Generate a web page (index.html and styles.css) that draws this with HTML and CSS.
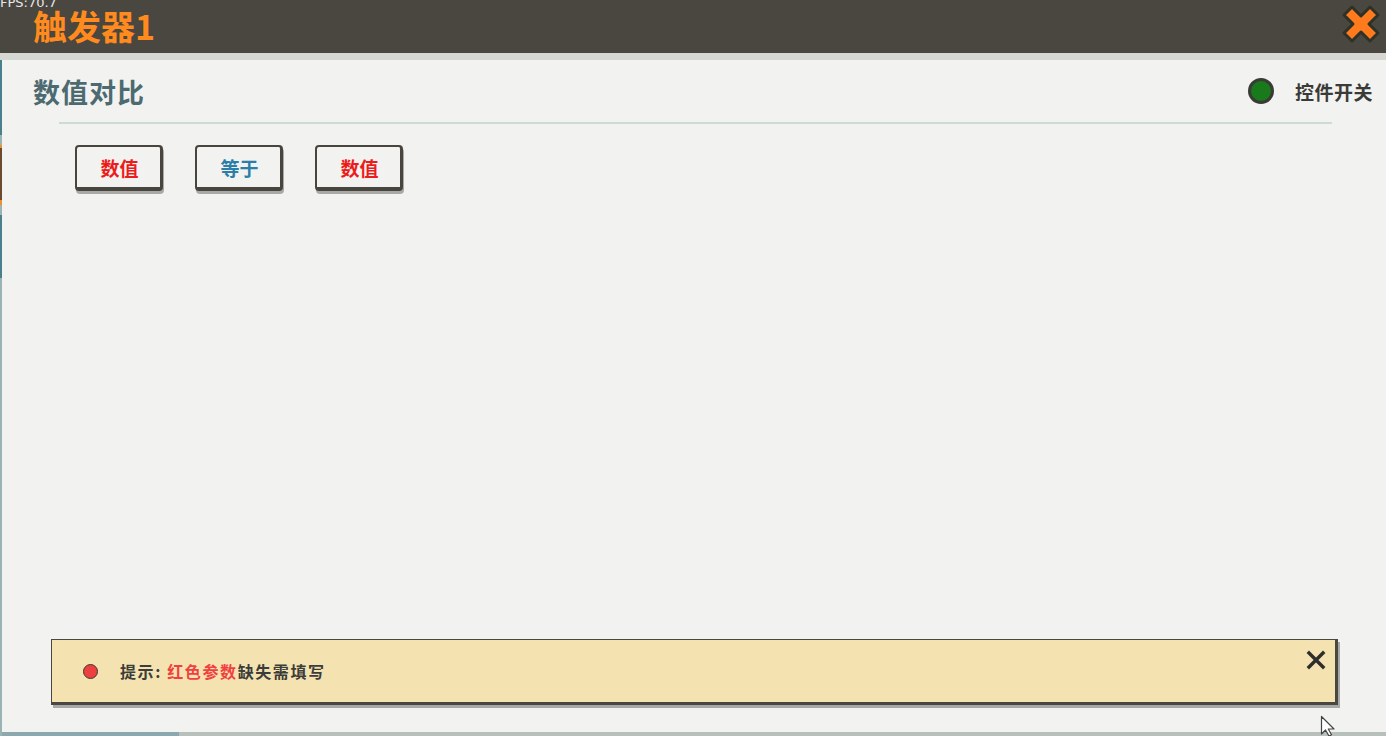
FILE: index.html
```html
<!DOCTYPE html>
<html lang="zh-CN">
<head>
    <meta charset="UTF-8">
    <meta name="viewport" content="width=device-width, initial-scale=1.0">
    <title>触发器1</title>
    <link rel="stylesheet" href="styles.css">
</head>
<body>
    <div class="janela">
        <!-- Barra superior -->
        <div class="topo">
            <div class="fps">FPS:70.7</div>
            <div class="titulo">触发器1</div>
            <button class="fechar-topo" aria-label="关闭">
                <svg width="42" height="42" viewBox="0 0 42 42">
                    <path d="M4 12 L12 4 L21 13 L30 4 L38 12 L29 21 L38 30 L30 38 L21 29 L12 38 L4 30 L13 21 Z"
                          fill="#ff7a1c" stroke="#2e3226" stroke-width="3" stroke-linejoin="round"/>
                </svg>
            </button>
        </div>

        <!-- Painel principal -->
        <div class="painel">
            <div class="painel-cabecalho">
                <div class="painel-titulo">数值对比</div>
                <div class="interruptor">
                    <span class="luz"></span>
                    <span class="interruptor-texto">控件开关</span>
                </div>
            </div>
            <div class="divisor"></div>

            <div class="parametros">
                <div class="parametro vermelho">数值</div>
                <div class="parametro azul">等于</div>
                <div class="parametro vermelho">数值</div>
            </div>

            <div class="espaco"></div>

            <!-- Dica -->
            <div class="dica">
                <span class="dica-ponto"></span>
                <span class="dica-texto">提示: <em>红色参数</em>缺失需填写</span>
                <button class="dica-fechar" aria-label="关闭">
                    <svg width="20" height="20" viewBox="0 0 20 20">
                        <path d="M3 3 L17 17 M17 3 L3 17" stroke="#2e2e2c" stroke-width="3.4" stroke-linecap="square"/>
                    </svg>
                </button>
            </div>

            <div class="rodape"></div>
        </div>

        <svg class="cursor" width="18" height="22" viewBox="0 0 18 22">
            <path d="M1.5 1.5 L1.5 19 L5.5 15 L9 21 L11.5 19.8 L8.3 14 L14 14 Z" fill="#fff" stroke="#444" stroke-width="1.2" stroke-linejoin="round"/>
        </svg>
    </div>
</body>
</html>
```

FILE: styles.css
```css
* {
    box-sizing: border-box;
}

body {
    margin: 0;
    font-family: "Noto Sans CJK SC", "Noto Sans", sans-serif;
    background-color: #f2f2f0;
    overflow: hidden;
}

.janela {
    height: 100vh;
    display: flex;
    flex-direction: column;
    position: relative;
}

/* Barra superior */
.topo {
    height: 53px;
    background-color: #4a4640;
    display: flex;
    align-items: center;
    justify-content: space-between;
    padding: 0 4px 0 33px;
    position: relative;
    flex-shrink: 0;
}

.fps {
    position: absolute;
    top: -5px;
    left: 0;
    font-family: "DejaVu Sans", sans-serif;
    font-size: 13px;
    color: #e8e8e8;
}

.titulo {
    font-size: 34px;
    font-weight: bold;
    color: #ff8a1e;
    line-height: 1;
    margin-top: -2px;
}

.fechar-topo {
    background: none;
    border: none;
    padding: 0;
    margin-top: -6px;
    display: flex;
}

/* Painel */
.painel {
    flex: 1;
    display: flex;
    flex-direction: column;
    background-color: #f2f2f0;
    border-top: 7px solid #d6d6d2;
    position: relative;
}

.painel::before {
    content: '';
    position: absolute;
    left: 0;
    top: 0;
    bottom: 0;
    width: 2px;
    background: linear-gradient(to bottom,
        #4a7f8c 0, #4a7f8c 75px,
        #9ab4b4 75px, #9ab4b4 85px,
        #f0902a 85px, #f0902a 88px,
        #6b4a30 88px, #6b4a30 140px,
        #f0902a 140px, #f0902a 145px,
        #9ab4b4 145px, #9ab4b4 155px,
        #4a7f8c 155px, #4a7f8c 218px,
        #9ab4b4 218px);
}

.painel-cabecalho {
    display: flex;
    justify-content: space-between;
    align-items: center;
    height: 62px;
    padding: 0 13px 0 33px;
}

.painel-titulo {
    font-size: 27px;
    letter-spacing: 1px;
    font-weight: bold;
    color: #4d6a70;
    line-height: 1;
    margin-top: 1px;
}

.interruptor {
    display: flex;
    align-items: center;
    gap: 21px;
}

.luz {
    width: 26px;
    height: 26px;
    border-radius: 50%;
    background-color: #187a1a;
    border: 3px solid #3a3a36;
}

.interruptor-texto {
    font-size: 19px;
    letter-spacing: 0.5px;
    font-weight: bold;
    color: #3a3a38;
    line-height: 1;
}

.divisor {
    height: 2px;
    background-color: #cbdcd4;
    margin: 0 54px 0 59px;
}

.parametros {
    display: flex;
    gap: 32px;
    padding-left: 75px;
    margin-top: 21px;
}

.parametro {
    width: 88px;
    height: 46px;
    border: 2px solid #48443e;
    border-bottom-width: 4px;
    border-right-width: 3px;
    border-radius: 4px;
    background-color: #f2f2f0;
    box-shadow: 1px 3px 0 #a8aaa8;
    display: flex;
    align-items: center;
    justify-content: center;
    padding-left: 2px;
    font-size: 19px;
    font-weight: bold;
}

.vermelho { color: #ec1c1c; }
.azul { color: #2c7fa8; }

.espaco {
    flex: 1;
}

/* Dica */
.dica {
    height: 66px;
    margin: 0 48px 27px 51px;
    background-color: #f4e3b0;
    border: 1px solid #4a4640;
    border-right-width: 3px;
    border-bottom-width: 3px;
    box-shadow: 2px 3px 0 #a8a8a8;
    display: flex;
    align-items: center;
    padding-left: 31px;
    position: relative;
}

.dica-ponto {
    width: 15px;
    height: 15px;
    border-radius: 50%;
    background-color: #ec4040;
    border: 1px solid #3a3a36;
}

.dica-texto {
    margin-left: 22px;
    font-size: 16px;
    letter-spacing: 1.6px;
    font-weight: bold;
    color: #3c3c3a;
}

.dica-texto em {
    font-style: normal;
    color: #f04040;
}

.dica-fechar {
    position: absolute;
    top: 10px;
    right: 9px;
    background: none;
    border: none;
    padding: 0;
    display: flex;
}

.rodape {
    height: 4px;
    background: linear-gradient(to right, #8aa8ad 0, #8aa8ad 179px, #b8c0bb 179px);
}

.cursor {
    position: absolute;
    left: 1320px;
    top: 715px;
}
```
